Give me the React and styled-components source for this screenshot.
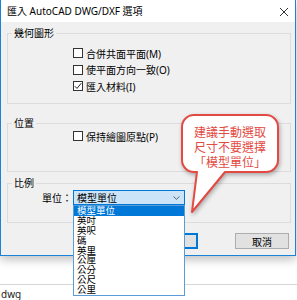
import React from 'react';
import styled, { createGlobalStyle } from 'styled-components';

const GlobalStyle = createGlobalStyle`
  html, body { margin: 0; padding: 0; background: #fff; }
  * { box-sizing: border-box; }
`;

const uiFont = `"Noto Sans", "Noto Sans CJK TC", sans-serif`;

// Page and dialog frame
const Page = styled.div`
  position: relative;
  width: 297px;
  height: 300px;
  overflow: hidden;
  background: #fff;
  font-family: ${uiFont};
  font-size: 10px;
  color: #000;
`;

const Dialog = styled.div`
  width: 296px;
  border: 1px solid #1a82d8;
  border-top: none;
  background: #f0f0f0;
  box-shadow: 0 3px 10px rgba(0, 0, 0, 0.28);
`;

const TitleBar = styled.div`
  height: 22px;
  background: #fff;
  display: flex;
  align-items: center;
  justify-content: space-between;
  padding: 0 6px 0 6px;
`;

const Title = styled.span`
  font-size: 10px;
  line-height: 12px;
  white-space: nowrap;
`;

const CloseIcon = styled.svg`
  width: 10px;
  height: 10px;
  margin-top: 1px;
`;

const Body = styled.div`
  padding: 5px 4px 6px 6px;
  display: flex;
  flex-direction: column;
`;

const Group = styled.fieldset`
  margin: ${p => p.$top || 0}px 0 0 0;
  border: 1px solid #dcdcdc;
  padding: ${p => p.$pt || 0}px 0 ${p => p.$pb || 0}px 0;
  min-width: 0;
`;

const Legend = styled.legend`
  margin-left: 4px;
  padding: 0 2px;
  font-size: 10px;
  line-height: 12px;
`;

const CheckList = styled.div`
  display: flex;
  flex-direction: column;
  gap: 2.5px;
  padding-left: 65px;
`;

const CheckRow = styled.label`
  height: 14px;
  display: flex;
  align-items: center;
  gap: 3px;
  white-space: nowrap;
`;

const Box = styled.span`
  width: 10px;
  height: 10px;
  border: 1px solid #333;
  background: #fff;
  display: flex;
  align-items: center;
  justify-content: center;
  flex-shrink: 0;
`;

const UnitRow = styled.div`
  display: flex;
  align-items: center;
  padding-left: 34px;
`;

const UnitLabel = styled.span`
  width: 31px;
`;

const Combo = styled.div`
  width: 112px;
  height: 15px;
  border: 1px solid #0078d7;
  background: #cce4f7;
  display: flex;
  align-items: center;
  justify-content: space-between;
  padding: 0 4px 0 3px;
`;

const ButtonRow = styled.div`
  margin-top: 10px;
  display: flex;
  justify-content: flex-end;
  gap: 37px;
  padding-right: 2px;
`;

const Button = styled.div`
  width: 54px;
  height: 16px;
  display: flex;
  align-items: center;
  justify-content: center;
  background: #e1e1e1;
  border: ${p => (p.$default ? '2px solid #0078d7' : '1px solid #adadad')};
`;

// Below the dialog
const Backdrop = styled.div`
  margin-top: 28px;
  border-top: 1px solid #d6d6d6;
  padding: 4px 0 0 1px;
  font-size: 10px;
  line-height: 10px;
  color: #222;
`;

// Dropdown popup of the combo box
const DropList = styled.ul`
  position: absolute;
  left: 73px;
  top: 205px;
  width: 112px;
  margin: 0;
  padding: 0;
  list-style: none;
  background: #fff;
  border: 1px solid #5a9bd8;
`;

const DropItem = styled.li`
  height: 9.9px;
  line-height: 9.9px;
  padding-left: 3px;
  font-size: 9.5px;
  background: ${p => (p.$active ? '#0078d7' : 'transparent')};
  color: ${p => (p.$active ? '#fff' : '#000')};
`;

// Annotation bubble
const Callout = styled.div`
  position: absolute;
  left: 180px;
  top: 113px;
  width: 102px;
  height: 102px;
`;

const CalloutShape = styled.svg`
  position: absolute;
  inset: 0;
  filter: drop-shadow(1px 2px 2px rgba(0, 0, 0, 0.3));
`;

const CalloutText = styled.div`
  position: relative;
  width: 100px;
  padding-top: 11px;
  text-align: center;
  color: #e24a42;
  font-family: "Noto Sans CJK TC", sans-serif;
  font-size: 12px;
  line-height: 15px;
`;

const Check = ({ checked, children }) => (
  <CheckRow>
    <Box>
      {checked && (
        <svg width="8" height="8" viewBox="0 0 8 8">
          <path d="M0.8 4.2 L3 6.4 L7.3 1.2" fill="none" stroke="#222" strokeWidth="1" />
        </svg>
      )}
    </Box>
    <span>{children}</span>
  </CheckRow>
);

const units = ['模型單位', '英吋', '英呎', '碼', '英里', '公厘', '公分', '公尺', '公里'];

export default function App() {
  return (
    <Page>
      <GlobalStyle />
      <Dialog>
        <TitleBar>
          <Title>匯入 AutoCAD DWG/DXF 選項</Title>
          <CloseIcon viewBox="0 0 10 10">
            <path d="M1 1 L9 9 M9 1 L1 9" stroke="#333" strokeWidth="1" />
          </CloseIcon>
        </TitleBar>
        <Body>
          <Group $pt={7} $pb={10}>
            <Legend>幾何圖形</Legend>
            <CheckList>
              <Check>合併共面平面(M)</Check>
              <Check>使平面方向一致(O)</Check>
              <Check checked>匯入材料(I)</Check>
            </CheckList>
          </Group>
          <Group $top={13} $pt={0} $pb={28}>
            <Legend>位置</Legend>
            <CheckList>
              <Check>保持繪圖原點(P)</Check>
            </CheckList>
          </Group>
          <Group $top={5} $pt={1} $pb={17}>
            <Legend>比例</Legend>
            <UnitRow>
              <UnitLabel>單位：</UnitLabel>
              <Combo>
                <span>模型單位</span>
                <svg width="7" height="4" viewBox="0 0 7 4">
                  <path d="M0.5 0.5 L3.5 3.3 L6.5 0.5" fill="none" stroke="#555" strokeWidth="0.9" />
                </svg>
              </Combo>
            </UnitRow>
          </Group>
          <ButtonRow>
            <Button $default>確定</Button>
            <Button>取消</Button>
          </ButtonRow>
        </Body>
      </Dialog>
      <Backdrop>dwg</Backdrop>

      <Callout>
        <CalloutShape width="102" height="102" viewBox="0 0 102 102">
          <path
            d="M14 2 H86 A12 12 0 0 1 98 14 V47 A12 12 0 0 1 86 59 H45 L12 99 L17 59 H14 A12 12 0 0 1 2 47 V14 A12 12 0 0 1 14 2 Z"
            fill="#fff"
            stroke="#e24a42"
            strokeWidth="2"
            strokeLinejoin="round"
          />
        </CalloutShape>
        <CalloutText>
          建議手動選取
          <br />
          尺寸不要選擇
          <br />
          「模型單位」
        </CalloutText>
      </Callout>

      <DropList>
        {units.map((u, i) => (
          <DropItem key={u} $active={i === 0}>{u}</DropItem>
        ))}
      </DropList>
    </Page>
  );
}
